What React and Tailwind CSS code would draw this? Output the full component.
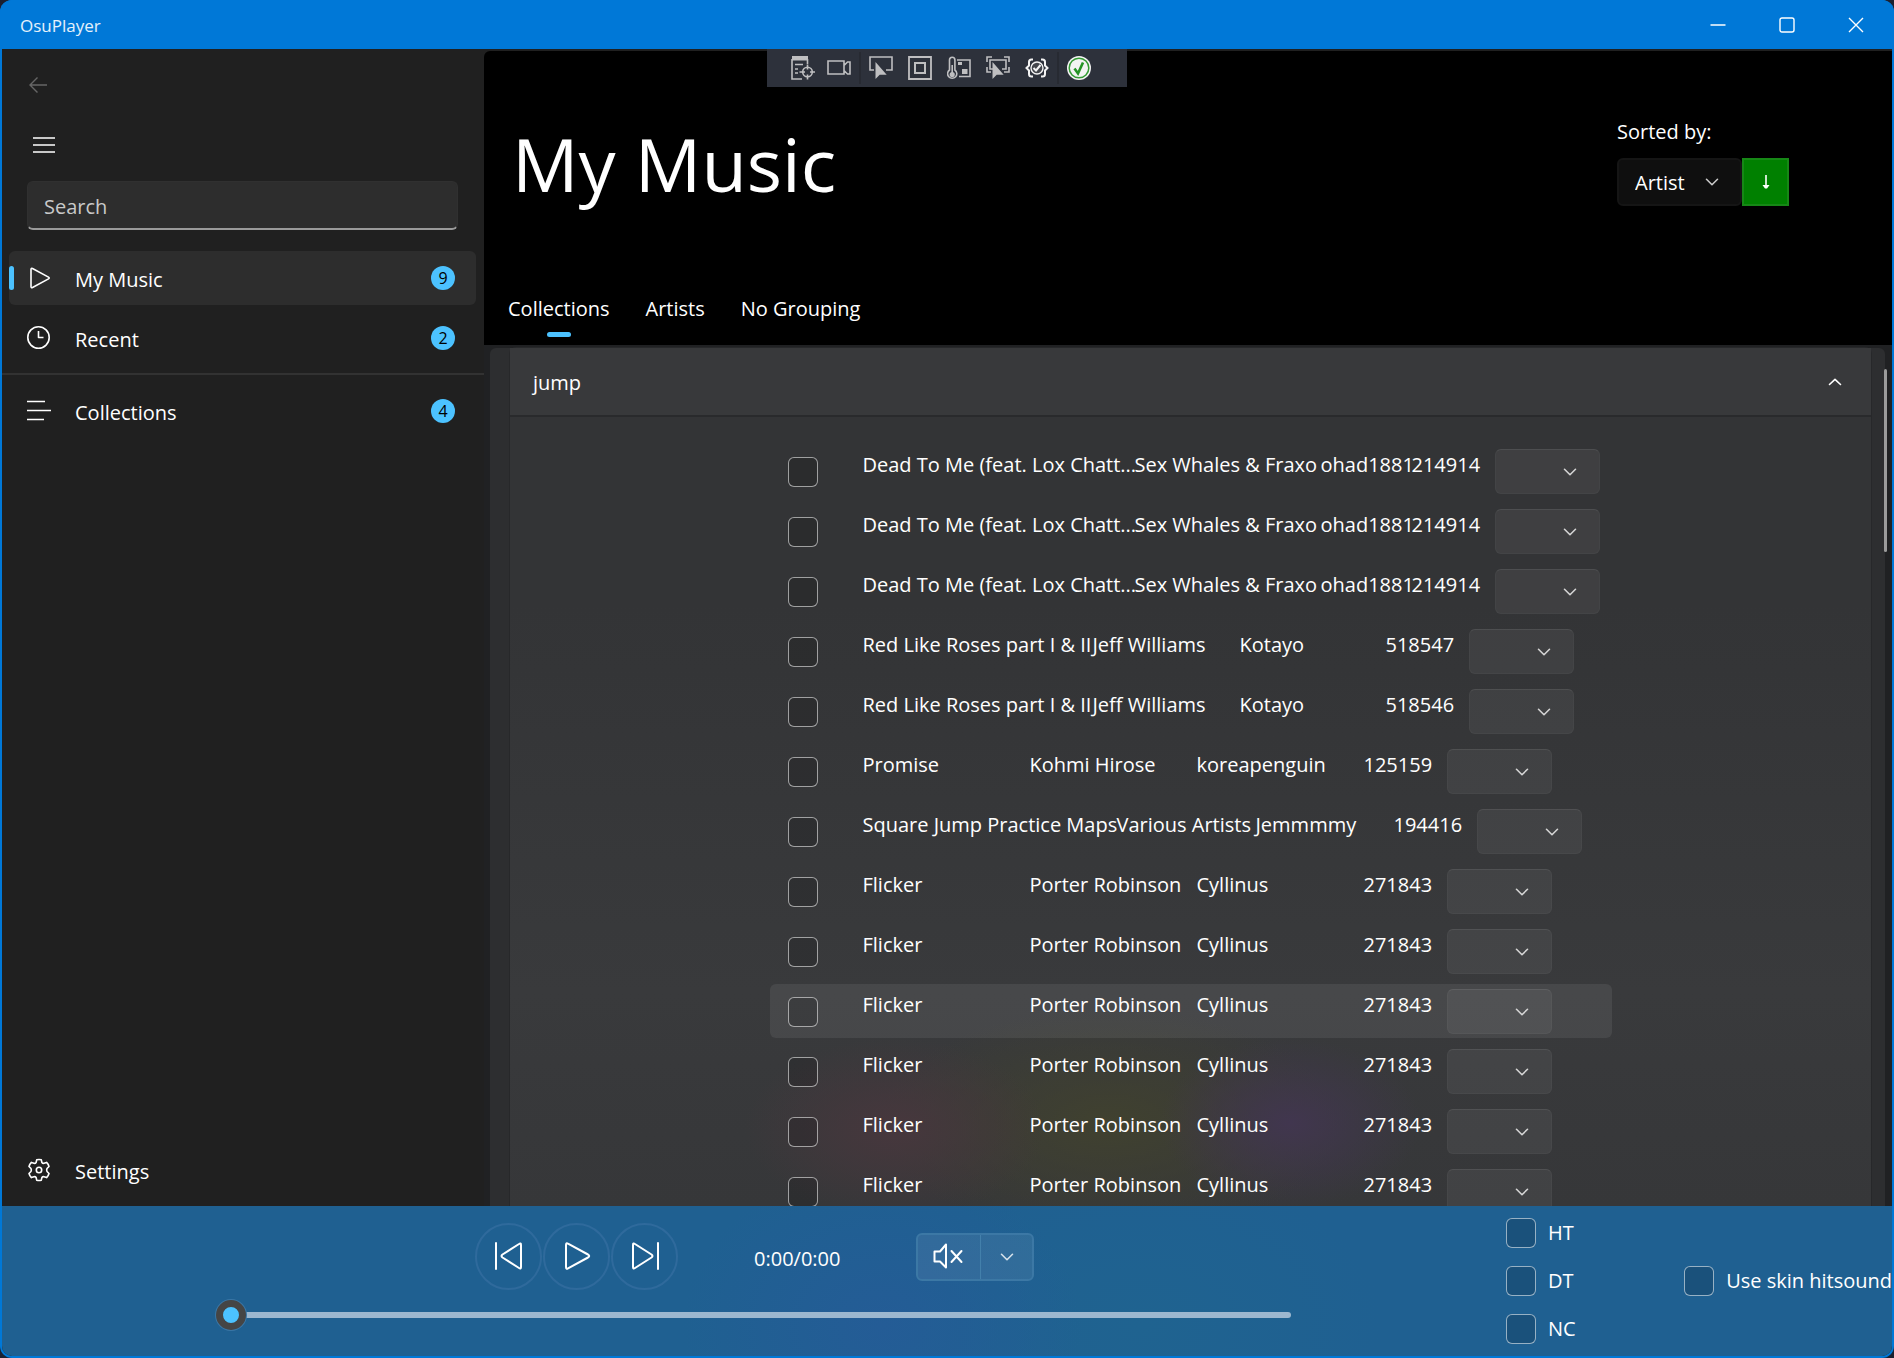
import React from "react";

const CHECKBOX =
  "size-[30px] shrink-0 appearance-none rounded-md border border-white/55 bg-black/15 checked:bg-[#4cc2ff]";

function Chevron({ up = false, className = "" }) {
  return (
    <svg
      viewBox="0 0 14 8"
      className={"h-2 w-3.5 " + className}
      fill="none"
      stroke="currentColor"
      strokeWidth="1.6"
      strokeLinecap="round"
      strokeLinejoin="round"
      aria-hidden="true"
    >
      <path d={up ? "M1.5 6.5 7 1.3l5.5 5.2" : "M1.5 1.3 7 6.7l5.5-5.4"} />
    </svg>
  );
}

/* ---------- Title bar ---------- */

function TitleBar() {
  const button = "flex w-[69px] items-center justify-center hover:bg-white/10";
  return (
    <header className="flex h-[49px] shrink-0 items-stretch bg-[#0078d7] pr-1 pl-5">
      <div className="flex flex-1 items-center pt-0.5 text-[17px] text-white/90">OsuPlayer</div>
      <button type="button" aria-label="Minimize" className={button}>
        <svg viewBox="0 0 16 16" className="size-4" stroke="currentColor" strokeWidth="1.5">
          <path d="M.5 8h15" />
        </svg>
      </button>
      <button type="button" aria-label="Maximize" className={button}>
        <svg viewBox="0 0 16 16" className="size-4" fill="none" stroke="currentColor" strokeWidth="1.4">
          <rect x="1" y="1" width="14" height="14" rx="2" />
        </svg>
      </button>
      <button type="button" aria-label="Close" className={button}>
        <svg viewBox="0 0 16 16" className="size-4" stroke="currentColor" strokeWidth="1.4">
          <path d="M1 1l14 14M15 1 1 15" />
        </svg>
      </button>
    </header>
  );
}

/* ---------- Debug toolbar ---------- */

function ToolIcon({ label, children }) {
  return (
    <button type="button" aria-label={label} className="size-6">
      <svg viewBox="0 0 24 24" className="size-6" fill="none" stroke="#bfbfc1" strokeWidth="1.6">
        {children}
      </svg>
    </button>
  );
}

const CURSOR = "M6.5 6v17l4.2-4.2h7z";

function DebugToolbar() {
  return (
    <div className="absolute top-[49px] left-1/2 z-10 flex h-[38px] w-[360px] -translate-x-1/2 items-center bg-[#2d313b] px-6">
      <div className="flex gap-3">
        <ToolIcon label="Go to Live Visual Tree">
          <path d="M1 0h16v4.500H1z" fill="#bfbfc1" stroke="none" />
          <path d="M1 3v20h10M16.500 3v5M4 8.500h8M4 13h3M4 17h3" />
          <circle cx="16.500" cy="16" r="4.800" />
          <path d="M16.500 8.500v5M16.500 18.500v5M8.500 16h5.500M19 16h5" />
        </ToolIcon>
        <ToolIcon label="Show in XAML Live Preview">
          <path d="M1 5h16v13H1zM17 9.500 20.500 6H23v12h-2.500L17 14.500" />
        </ToolIcon>
      </div>
      <div className="ml-2 flex gap-[15px] border-l-2 border-[#272a32] py-1 pl-2">
        <ToolIcon label="Select Element">
          <path d="M5 14H1V1h22v13h-6" />
          <path d={CURSOR} fill="#bfbfc1" stroke="none" />
        </ToolIcon>
        <ToolIcon label="Display Layout Adorners">
          <path d="M1 1h22v22H1z" strokeWidth="1.8" />
          <path d="M7 7h10v10H7z" strokeWidth="2" />
        </ToolIcon>
        <ToolIcon label="Track Focused Element">
          <path d="M2.500 14V4a2.700 2.700 0 0 1 5.400 0v10a4.600 4.600 0 1 1-5.400 0z" />
          <path d="M5.200 9v8" />
          <circle cx="5.200" cy="18.500" r="1.800" fill="#bfbfc1" />
          <path d="M10 4h13v16.500H12" />
          <path d="M11 6h4v3h-4zM15 13h5.500v5H15z" fill="#bfbfc1" stroke="none" />
        </ToolIcon>
        <ToolIcon label="Hot Reload Selection">
          <path d="M1 6V1h5M18 1h5v5M1 11v5h4M23 11v5h-5" />
          <path d="M7 13H4V4h16v9h-4" />
          <path d={CURSOR} fill="#bfbfc1" stroke="none" />
        </ToolIcon>
        <ToolIcon label="Binding Failures">
          <g stroke="#f4f4f4">
            <path
              d="M8 3.500H6.500Q4 3.500 4 6v3.500L1.500 12 4 14.500V18q0 2.500 2.500 2.500H8M16 3.500h1.500Q20 3.500 20 6v3.500l2.500 2.500L20 14.500V18q0 2.500-2.500 2.500H16"
              strokeWidth="2"
            />
            <circle cx="12" cy="12" r="6" strokeWidth="1.400" fill="#44464c" />
            <path d="m8.500 12 2.500 2.500L15.500 9" strokeWidth="2" />
          </g>
        </ToolIcon>
      </div>
      <div className="ml-2 flex border-l-2 border-[#272a32] py-1 pl-2">
        <ToolIcon label="Hot Reload">
          <circle cx="12" cy="12" r="12" fill="#f3f3f3" stroke="none" />
          <circle cx="12" cy="12" r="9.800" stroke="#339a33" strokeWidth="1.500" />
          <path d="m7.500 12.500 3.500 5 5-11" stroke="#259325" strokeWidth="2.600" />
        </ToolIcon>
      </div>
    </div>
  );
}

/* ---------- Navigation ---------- */

const ICONS = {
  play: <path d="M4 3.400v17.200q0 1.600 1.500.900l16-8.600q1.400-.900 0-1.800l-16-8.600Q4 1.800 4 3.400z" />,
  clock: (
    <>
      <circle cx="11.500" cy="11.500" r="10.700" />
      <path d="M11.500 5v6.500h5" />
    </>
  ),
  list: <path d="M0 2.500h18M0 11.500h24M0 20.500h17" />,
  gear: (
    <>
      <circle cx="12" cy="12" r="2.700" />
      <path d="M9.700 1.800Q12 1.200 14.300 1.800L14.900 4.500Q15.700 5.600 17 5.300L19.600 4.400Q21.400 6.200 22 8.500L20 10.500Q19.300 12 20 13.500L22 15.500Q21.400 17.800 19.600 19.600L17 18.700Q15.700 18.400 14.900 19.500L14.300 22.200Q12 22.800 9.700 22.200L9.100 19.500Q8.300 18.400 7 18.700L4.400 19.600Q2.600 17.800 2 15.500L4 13.500Q4.700 12 4 10.500L2 8.500Q2.600 6.200 4.400 4.400L7 5.300Q8.300 5.600 9.100 4.500Z" />
    </>
  ),
};

function NavItem({ icon, label, count, active = false }) {
  return (
    <a
      href="#"
      className={
        "relative mr-2 ml-[7px] flex h-[54px] items-center rounded-md pr-[21px] pl-[18px] " +
        (active ? "bg-[#2d2d2d]" : "hover:bg-white/5")
      }
    >
      {active && <span className="absolute left-0 h-6 w-[5px] rounded-full bg-[#4cc2ff]" />}
      <svg
        viewBox="0 0 24 24"
        className="mr-6 size-6 shrink-0 overflow-visible"
        fill="none"
        stroke="currentColor"
        strokeWidth="1.6"
        strokeLinejoin="round"
        aria-hidden="true"
      >
        {ICONS[icon]}
      </svg>
      <span className="flex-1 pt-[3px]">{label}</span>
      {count !== undefined && (
        <span className="flex size-6 items-center justify-center rounded-full bg-[#4cc2ff] text-base text-black">
          {count}
        </span>
      )}
    </a>
  );
}

function Sidebar() {
  return (
    <nav className="flex w-[482px] shrink-0 flex-col bg-[#202020]">
      <button type="button" aria-label="Back" className="mt-6 ml-[26px] flex h-6 w-7 items-center text-[#666]">
        <svg viewBox="0 0 20 18" className="h-[18px] w-5" fill="none" stroke="currentColor" strokeWidth="1.4">
          <path d="M19 9H2M9.500 1.500 2 9l7.500 7.500" />
        </svg>
      </button>
      <button type="button" aria-label="Menu" className="mt-9 ml-[31px] flex h-6 w-7 items-center">
        <svg viewBox="0 0 22 18" className="h-[18px] w-[22px]" stroke="currentColor" strokeWidth="1.5">
          <path d="M0 2h22M0 9h22M0 16h22" />
        </svg>
      </button>
      <input
        type="search"
        aria-label="Search"
        placeholder="Search"
        className="mt-6 mr-[26px] ml-[25px] h-[49px] rounded-md border border-b-2 border-[#303030] border-b-[#9a9a9a] bg-[#2d2d2d] px-4 pt-0.5 outline-none placeholder:text-[#c9c9c9]"
      />
      <div className="mt-[21px] flex flex-col gap-1.5">
        <NavItem icon="play" label="My Music" count={9} active />
        <NavItem icon="clock" label="Recent" count={2} />
      </div>
      <hr className="mt-2 mb-[9px] border-t-2 border-[#323232]" />
      <NavItem icon="list" label="Collections" count={4} />
      <div className="mt-auto mb-[9px]">
        <NavItem icon="gear" label="Settings" />
      </div>
    </nav>
  );
}

/* ---------- Page header ---------- */

function PageHeader() {
  return (
    <div className="mt-0.5 flex h-[294px] shrink-0 flex-col justify-between rounded-tl-md bg-black">
      <div className="flex justify-between pt-[60px] pr-[103px] pl-7">
        <h1 className="text-[74px] leading-[106px]">My Music</h1>
        <div className="pt-[7px]">
          <label htmlFor="sort" className="block leading-7">
            Sorted by:
          </label>
          <div className="mt-3 flex">
            <div className="relative">
              <select
                id="sort"
                className="h-12 w-[125px] appearance-none rounded-md border-2 border-[#151515] bg-[#0f0f0f] pt-0.5 pl-4"
              >
                <option>Artist</option>
              </select>
              <Chevron className="pointer-events-none absolute top-5 right-[23px] text-[#c8c8c8]" />
            </div>
            <button
              type="button"
              aria-label="Sort descending"
              className="flex h-12 w-[47px] items-center justify-center border-2 border-[#168816] bg-[#008000]"
            >
              <svg viewBox="0 0 8 16" className="h-4 w-2" stroke="currentColor" strokeWidth="1.6">
                <path d="M4 1v12" />
                <path d="M.500 11h7L5 14.500H3z" fill="currentColor" stroke="none" />
              </svg>
            </button>
          </div>
        </div>
      </div>
      <div role="tablist" className="flex gap-9 pb-2 pl-6">
        {["Collections", "Artists", "No Grouping"].map((tab, i) => (
          <button
            key={tab}
            type="button"
            role="tab"
            aria-selected={i === 0}
            className="flex flex-col items-center leading-7"
          >
            {tab}
            <span className={"mt-[9px] h-[5px] w-6 rounded-full " + (i === 0 ? "bg-[#4cc2ff]" : "")} />
          </button>
        ))}
      </div>
    </div>
  );
}

/* ---------- Song list ---------- */

const COLS = {
  full: "grid-cols-[272px_186px_91px_83px]",
  roses: "grid-cols-[230px_147px_146px_83px]",
  even: "grid-cols-[167px_167px_167px_83px]",
  square: "grid-cols-[254px_139px_138px_83px]",
};

const dead = { cols: "full", cells: ["Dead To Me (feat. Lox Chatt...", "Sex Whales & Fraxo", "ohad1881", "214914"] };
const flicker = { cols: "even", cells: ["Flicker", "Porter Robinson", "Cyllinus", "271843"] };

const SONGS = [
  dead,
  dead,
  dead,
  { cols: "roses", cells: ["Red Like Roses part I & II", "Jeff Williams", "Kotayo", "518547"] },
  { cols: "roses", cells: ["Red Like Roses part I & II", "Jeff Williams", "Kotayo", "518546"] },
  { cols: "even", cells: ["Promise", "Kohmi Hirose", "koreapenguin", "125159"] },
  { cols: "square", cells: ["Square Jump Practice Maps", "Various Artists", "Jemmmmy", "194416"] },
  flicker,
  flicker,
  { ...flicker, hovered: true },
  flicker,
  flicker,
  flicker,
];

function SongRow({ song }) {
  return (
    <li
      className={
        "flex h-[54px] items-center rounded-md pl-[18px] " + (song.hovered ? "bg-white/7" : "hover:bg-white/5")
      }
    >
      <input type="checkbox" aria-label={"Select " + song.cells[0]} className={CHECKBOX + " mt-0.5 mr-[45px]"} />
      <div className={"grid pb-3 leading-7 whitespace-nowrap " + COLS[song.cols]}>
        {song.cells.map((cell) => (
          <span key={cell}>{cell}</span>
        ))}
      </div>
      <div className="relative">
        <select
          aria-label={"Difficulty of " + song.cells[0]}
          className="block h-[45px] w-[105px] appearance-none rounded-md border border-white/3 border-t-white/8 bg-white/6"
        >
          <option />
        </select>
        <Chevron className="pointer-events-none absolute top-[19px] right-[23px] text-[#d5d5d5]" />
      </div>
    </li>
  );
}

function SongList() {
  return (
    <div className="relative min-h-0 flex-1 overflow-hidden bg-[#202123] pt-[3px] pr-[7px] pl-1.5">
      <div className="h-full rounded-t-md bg-[#2d2e30] pr-3.5 pl-5">
        <section className="h-full rounded-t-md bg-[#353638] bg-[radial-gradient(130px_85px_at_780px_775px,#41364f,transparent),radial-gradient(150px_90px_at_385px_780px,#47373d,transparent),radial-gradient(230px_115px_at_600px_775px,#40412f,transparent),linear-gradient(#333436,#333436_30%,#393a3c_75%,#363739)] shadow-[0_0_0_1px_#27282a]">
          <h2 className="border-b-2 border-[#292a2c] bg-[#38393b]">
            <button type="button" className="flex h-[67px] w-full items-center justify-between pr-[29px] pl-[23px]">
              <span className="pt-0.5">jump</span>
              <Chevron up />
            </button>
          </h2>
          <ul className="mx-auto flex w-[842px] flex-col gap-1.5 pt-[27px]">
            {SONGS.map((song, i) => (
              <SongRow key={i} song={song} />
            ))}
          </ul>
        </section>
      </div>
      <div className="absolute top-6 right-[5px] h-[183px] w-[3px] rounded-full bg-[#9b9b9b]" />
    </div>
  );
}

/* ---------- Player ---------- */

function RoundButton({ label, children }) {
  return (
    <button
      type="button"
      aria-label={label}
      className="flex size-[67px] items-center justify-center rounded-full border-2 border-[#2f6a9c] pb-0.5 hover:bg-white/5"
    >
      <svg
        viewBox="0 0 32 32"
        className="size-8"
        fill="none"
        stroke="currentColor"
        strokeWidth="2"
        strokeLinecap="round"
        strokeLinejoin="round"
      >
        {children}
      </svg>
    </button>
  );
}

function CheckOption({ label }) {
  return (
    <label className="flex items-center gap-3 whitespace-nowrap">
      <input type="checkbox" className={CHECKBOX} />
      {label}
    </label>
  );
}

function Player() {
  return (
    <footer className="flex h-[150px] shrink-0 overflow-hidden bg-[#1f6091] bg-[radial-gradient(200px_160px_at_880px_120px,#245c96,transparent),radial-gradient(240px_160px_at_1140px_120px,#1f6390,transparent)]">
      <div className="flex min-w-0 flex-1 flex-col pt-[17px] pr-[215px] pl-[214px]">
        <div className="flex items-center pl-[259px]">
          <div className="flex gap-px">
            <RoundButton label="Previous">
              <path d="M3 3v26M28 5v22q0 2.500-2 1L9.500 17.500q-2-1.500 0-3L26 4q2-1.500 2 1z" />
            </RoundButton>
            <RoundButton label="Play">
              <path d="M5 5v22q0 2.500 2 1.300L27 17.500q2.400-1.500 0-3L7 3.700Q5 2.500 5 5z" />
            </RoundButton>
            <RoundButton label="Next">
              <path d="M29 3v26M4 5v22q0 2.500 2 1l16.500-10.500q2-1.500 0-3L6 4Q4 2.500 4 5z" />
            </RoundButton>
          </div>
          <span className="ml-[76px] w-[162px] pt-1">0:00/0:00</span>
          <div className="flex h-12 rounded-md border-2 border-[#3c78a5] bg-white/8">
            <button type="button" aria-label="Unmute" className="flex w-[62px] items-center justify-center pr-0.5 pb-0.5">
              <svg
                viewBox="0 0 30 28"
                className="h-7 w-[30px]"
                fill="none"
                stroke="currentColor"
                strokeWidth="2"
                strokeLinejoin="round"
              >
                <path d="M1.500 9.500H7L13 2.500v23L7 19.500H1.500z" />
                <path d="m18.500 9 10 11M28.500 9l-10 11" strokeLinecap="round" />
              </svg>
            </button>
            <button
              type="button"
              aria-label="Volume options"
              className="flex w-[52px] items-center justify-center border-l border-[#4380ab] text-white/80"
            >
              <Chevron />
            </button>
          </div>
        </div>
        <input
          type="range"
          aria-label="Song position"
          min="0"
          max="100"
          defaultValue="0"
          className="mt-[22px] h-1.5 w-full appearance-none rounded-full bg-[#9cb7cf] [&::-webkit-slider-thumb]:size-[30px] [&::-webkit-slider-thumb]:appearance-none [&::-webkit-slider-thumb]:rounded-full [&::-webkit-slider-thumb]:border-[7px] [&::-webkit-slider-thumb]:border-[#454545] [&::-webkit-slider-thumb]:bg-[#4cc2ff] [&::-webkit-slider-thumb]:shadow-[0_0_0_1px_#3a76a5]"
        />
      </div>
      <div className="flex w-[386px] shrink-0 items-start pt-3">
        <div className="flex w-[181px] flex-col gap-[18px] leading-[30px]">
          <CheckOption label="HT" />
          <CheckOption label="DT" />
          <CheckOption label="NC" />
        </div>
        <div className="pt-12 leading-[30px]">
          <CheckOption label="Use skin hitsound" />
        </div>
      </div>
    </footer>
  );
}

export default function App() {
  return (
    <div className="h-screen min-h-[800px] bg-[#1b2030] font-['Open_Sans','Noto_Sans',sans-serif] text-xl text-white">
      <div className="relative flex h-full flex-col overflow-hidden rounded-xl bg-[#0078d7]">
        <TitleBar />
        <DebugToolbar />
        <div className="mx-0.5 mb-0.5 flex min-h-0 flex-1 flex-col overflow-hidden rounded-b-[10px] bg-[#202020]">
          <div className="flex min-h-0 flex-1">
            <Sidebar />
            <main className="flex min-w-0 flex-1 flex-col">
              <PageHeader />
              <SongList />
            </main>
          </div>
          <Player />
        </div>
      </div>
    </div>
  );
}
